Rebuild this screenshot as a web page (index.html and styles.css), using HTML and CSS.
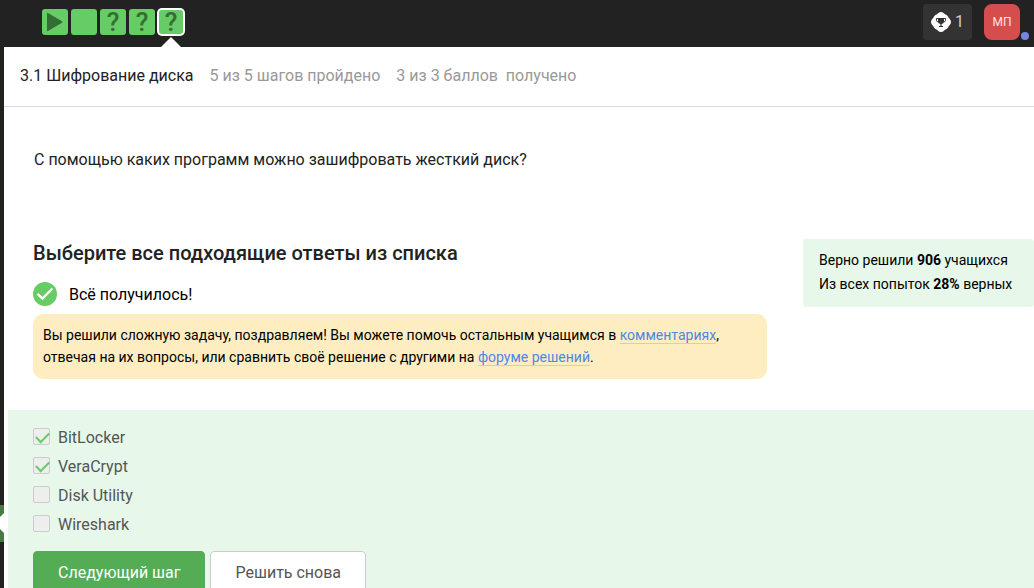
FILE: index.html
```html
<!DOCTYPE html>
<html lang="ru">
<head>
<meta charset="utf-8">
<meta name="viewport" content="width=device-width, initial-scale=1">
<title>Шифрование диска</title>
<link rel="stylesheet" href="styles.css">
</head>
<body>
<div class="app">
  <header class="topbar">
    <nav class="steps" aria-label="Шаги урока">
      <a class="step" href="#step-1" aria-label="Шаг 1">
        <svg class="step-icon" viewBox="0 0 26 26"><path d="M5 4.500Q5 3.500 6 4L20 12.200Q21 13 20 13.800L6 22Q5 22.500 5 21.500Z"/></svg>
      </a>
      <a class="step" href="#step-2" aria-label="Шаг 2"></a>
      <a class="step" href="#step-3">?</a>
      <a class="step" href="#step-4">?</a>
      <a class="step step-current" href="#step-5" aria-current="step">?</a>
    </nav>
    <div class="account">
      <button class="score" type="button" aria-label="Достижения">
        <svg class="score-icon" viewBox="0 0 20 20">
          <path fill="#fff" d="M10 0C12 0 13 1.500 14.500 2.500C16 3.200 17 4 17.500 5.500C18.500 7 20 8 20 10S18.500 13 17.500 14.500C17 16 16 16.800 14.500 17.500C13 18.500 12 20 10 20S7 18.500 5.500 17.500C4 16.800 3 16 2.500 14.500C1.500 13 0 12 0 10S1.500 7 2.500 5.500C3 4 4 3.200 5.500 2.500C7 1.500 8 0 10 0Z"/>
          <path fill="#333" d="M7 6H13V9.500Q13 11.500 10.600 12V14H12V15H8V14H9.400V12Q7 11.500 7 9.500Z"/>
          <path fill="none" stroke="#333" d="M7 6.500H5.500V8.500Q5.500 9.800 7.500 10M13 6.500H14.500V8.500Q14.500 9.800 12.500 10"/>
        </svg>
        <span>1</span>
      </button>
      <button class="avatar" type="button">МП<span class="presence"></span></button>
    </div>
  </header>

  <div class="body">
    <aside class="rail"><span class="rail-current"></span></aside>
    <main class="lesson">
      <div class="lesson-head">
        <span class="lesson-title">3.1 Шифрование диска</span>
        <span>5 из 5 шагов пройдено</span>
        <span>3 из 3 баллов &nbsp;получено</span>
      </div>

      <p class="question">С помощью каких программ можно зашифровать жесткий диск?</p>

      <section class="task">
        <div class="feedback">
          <h1 class="task-title">Выберите все подходящие ответы из списка</h1>
          <div class="verdict">
            <svg class="verdict-icon" viewBox="0 0 24 24"><circle cx="12" cy="12" r="12" fill="#66cc66"/><path d="M4.500 11.800L9.500 16.500L19.300 6.500" fill="none" stroke="#fff" stroke-width="2.400"/></svg>
            <span>Всё получилось!</span>
          </div>
          <p class="hint">Вы решили сложную задачу, поздравляем! Вы можете помочь остальным учащимся в <a href="#comments">комментариях</a>, отвечая на их вопросы, или сравнить своё решение с другими на <a href="#solutions">форуме решений</a>.</p>
        </div>
        <div class="stats">
          <div>Верно решили <b>906</b> учащихся</div>
          <div>Из всех попыток <b>28%</b> верных</div>
        </div>
      </section>

      <form class="answers">
        <div class="options">
          <label class="option"><input class="tick" type="checkbox" checked disabled><span>BitLocker</span></label>
          <label class="option"><input class="tick" type="checkbox" checked disabled><span>VeraCrypt</span></label>
          <label class="option"><input class="tick" type="checkbox" disabled><span>Disk Utility</span></label>
          <label class="option"><input class="tick" type="checkbox" disabled><span>Wireshark</span></label>
        </div>
        <div class="actions">
          <button class="btn btn-primary" type="button">Следующий шаг</button>
          <button class="btn" type="button">Решить снова</button>
        </div>
      </form>
    </main>
  </div>
</div>
</body>
</html>
```

FILE: styles.css
```css
* {
  box-sizing: border-box;
}

body {
  margin: 0;
  background: #fff;
  color: #000;
  font: 16px/24px Roboto, "Liberation Sans", sans-serif;
}

button {
  font: inherit;
  cursor: pointer;
}

.app {
  display: flex;
  flex-direction: column;
  height: 100vh;
  overflow: hidden;
}

.topbar {
  display: flex;
  flex: none;
  justify-content: space-between;
  height: 47px;
  padding: 4px 14px 0 42px;
  background: #222;
}

.steps {
  display: flex;
  gap: 3px;
  padding-top: 5px;
}

.step {
  width: 26px;
  height: 26px;
  border-radius: 3px;
  background: #66cc66;
  color: #336e33;
  font-size: 26px;
  font-weight: 500;
  line-height: 26px;
  text-align: center;
  text-decoration: none;
}

.step-icon {
  display: block;
  fill: #336e33;
}

.step-current {
  position: relative;
  box-shadow: 0 0 0 2px #fff;
  height: 24px;
  width: 24px;
  margin: 1px;
  line-height: 24px;
}

.step-current::after {
  content: "";
  position: absolute;
  top: 27px;
  left: 2px;
  border: 10px solid transparent;
  border-top: 0;
  border-bottom-color: #fff;
}

.account {
  display: flex;
  gap: 12px;
}

.score {
  display: flex;
  align-items: center;
  gap: 4px;
  height: 36px;
  padding: 0 8px;
  border: 0;
  border-radius: 4px;
  background: #333;
  color: #ccc;
}

.score-icon {
  width: 20px;
  height: 20px;
}

.avatar {
  position: relative;
  width: 36px;
  height: 36px;
  padding: 0;
  border: 0;
  border-radius: 8px;
  background: #d64d4d;
  color: #fbe6e6;
  font-size: 12px;
}

.presence {
  position: absolute;
  right: -9px;
  bottom: 0;
  width: 8px;
  height: 8px;
  border-radius: 50%;
  background: #7585e0;
}

.body {
  display: flex;
  flex: 1;
  min-height: 0;
}

.rail {
  display: flex;
  align-items: flex-end;
  width: 4px;
  padding-bottom: 46px;
  background: #23201e;
}

.rail-current {
  position: relative;
  width: 4px;
  height: 37px;
  overflow: hidden;
  background: #467c43;
}

.rail-current::after {
  content: "";
  position: absolute;
  top: 8px;
  right: 0;
  border: 10px solid transparent;
  border-left: 0;
  border-right-color: #fff;
}

.lesson {
  flex: 1;
  min-width: 0;
}

.lesson-head {
  display: flex;
  align-items: center;
  gap: 16px;
  height: 60px;
  padding: 0 16px 2px;
  border-bottom: 1px solid #ddd;
  color: #999;
}

.lesson-title {
  color: #222;
}

.question {
  margin: 41px 30px 0;
  color: #222;
}

.task {
  display: flex;
  align-items: flex-start;
  justify-content: space-between;
  gap: 36px;
  padding: 67px 0 31px 29px;
}

.feedback {
  flex: 1;
}

.task-title {
  margin: 0;
  color: #222;
  font-size: 20px;
  font-weight: 500;
  line-height: 28px;
}

.verdict {
  display: flex;
  align-items: flex-end;
  gap: 12px;
  padding: 15px 0 8px;
  line-height: 22px;
}

.verdict-icon {
  width: 24px;
  height: 24px;
}

.hint {
  margin: 0;
  padding: 10px 10px 11px;
  border-radius: 10px;
  background: #ffedc2;
  font-size: 14px;
  line-height: 22px;
}

.hint a {
  border-bottom: 1px solid #c5d0df;
  color: #4a88e8;
  text-decoration: none;
}

.stats {
  flex: 0 0 231px;
  padding: 9px 0 11px 16px;
  border-radius: 3px;
  background: #e7f8ea;
  font-size: 14px;
  white-space: nowrap;
}

.answers {
  margin-left: 4px;
  padding: 16px 25px;
  background: #e7f8ea;
}

.options {
  display: flex;
  flex-direction: column;
  gap: 5px;
}

.option {
  display: flex;
  align-items: flex-start;
  gap: 8px;
  color: #555;
}

.tick {
  appearance: none;
  width: 17px;
  height: 17px;
  margin: 2px 0 0;
  border: 1px solid #ccc;
  border-radius: 2px;
  background: #eee;
}

.tick:checked {
  padding: 3px 2px;
}

.tick:checked::before {
  content: "";
  display: block;
  width: 11px;
  height: 6px;
  border: solid #66cc66;
  border-width: 0 0 2px 2px;
  transform: rotate(-45deg);
}

.actions {
  display: flex;
  gap: 5px;
  padding-top: 14px;
}

.btn {
  height: 44px;
  padding: 0 24px;
  border: 1px solid #ccc;
  border-radius: 4px;
  background: #fff;
  color: #555;
}

.btn-primary {
  border-color: #54ad54;
  background: #54ad54;
  color: #fff;
}
```
